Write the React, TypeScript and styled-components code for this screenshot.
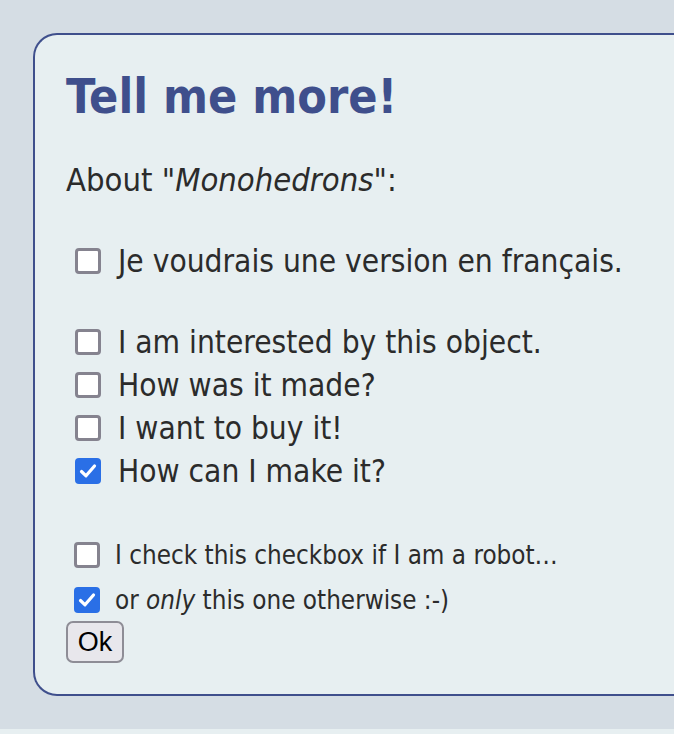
import React from 'react';
import styled, {createGlobalStyle} from "styled-components";

const GlobalStyle = createGlobalStyle`
    html {
        background: #e7eff1;
    }
    body {
        margin: 0;
        font-family: "DejaVu Sans Condensed", "DejaVu Sans", sans-serif;
        color: #2b2b2b;
    }
`

type OptionPropsType = {
    label: React.ReactNode,
    checked?: boolean,
    small?: boolean
}

const Option = (props: OptionPropsType) => {
    return (
        <StyledOption $small={props.small}>
            <Box $checked={props.checked}>
                {props.checked && (
                    <svg width="22" height="22" viewBox="0 0 22 22">
                        <path d="M4.5 11.5 L9 15.8 L17.5 6" fill="none" stroke="#fff" strokeWidth="3.2"
                              strokeLinecap="round" strokeLinejoin="round"/>
                    </svg>
                )}
            </Box>
            <Label>{props.label}</Label>
        </StyledOption>
    );
};

export default function App() {
    return (
        <Page>
            <GlobalStyle/>
            <Form>
                <Title>Tell me more!</Title>
                <Intro>About "<em>Monohedrons</em>":</Intro>
                <Group $space={45}>
                    <Option label="Je voudrais une version en français."/>
                </Group>
                <Group $space={48}>
                    <Option label="I am interested by this object."/>
                    <Option label="How was it made?"/>
                    <Option label="I want to buy it!"/>
                    <Option label="How can I make it?" checked/>
                </Group>
                <Group $space={3} $small>
                    <Option label="I check this checkbox if I am a robot…" small/>
                    <Option label={<>or <em>only</em> this one otherwise :-)</>} checked small/>
                </Group>
                <Button>Ok</Button>
            </Form>
        </Page>
    );
}

const Page = styled.div`
    background: #d5dde4;
    padding: 33px 0 33px 33px;
    overflow: hidden;
`

const Form = styled.div`
    width: 700px;
    box-sizing: border-box;
    background: #e7eff1;
    border: 2px solid #3f4f8c;
    border-right: none;
    border-radius: 24px 0 0 24px;
    padding: 33px 0 31px 31px;
    display: flex;
    flex-direction: column;
    align-items: flex-start;
`

const Title = styled.h1`
    margin: 0 0 38px;
    font-size: 48px;
    line-height: 56px;
    font-weight: bold;
    color: #3f4f8c;
`

const Intro = styled.p`
    margin: 0 0 45px;
    font-size: 32.5px;
    line-height: 36px;
`

const Group = styled.div<{ $small?: boolean, $space: number }>`
    display: flex;
    flex-direction: column;
    gap: ${props => props.$small ? "9px" : "7px"};
    margin-bottom: ${props => props.$space}px;
`

const StyledOption = styled.label<{ $small?: boolean }>`
    display: flex;
    align-items: center;
    gap: ${props => props.$small ? "15px" : "17px"};
    padding-left: ${props => props.$small ? "8px" : "9px"};
    font-size: ${props => props.$small ? "25.8px" : "31.4px"};
    line-height: 36px;
`

const Box = styled.span<{ $checked?: boolean }>`
    width: 26px;
    height: 26px;
    box-sizing: border-box;
    border-radius: 4px;
    border: ${props => props.$checked ? "none" : "3px solid #85838f"};
    background: ${props => props.$checked ? "#2a6fe6" : "#fff"};
    display: flex;
    align-items: center;
    justify-content: center;
    flex-shrink: 0;
`

const Label = styled.span`
    white-space: nowrap;
`

const Button = styled.button`
    font-family: "Liberation Sans", Arial, sans-serif;
    font-size: 27px;
    color: #000;
    background: #e8e7ec;
    border: 2px solid #8e8d96;
    border-radius: 7px;
    padding: 0 8px;
    height: 42px;
    width: 58px;
`
